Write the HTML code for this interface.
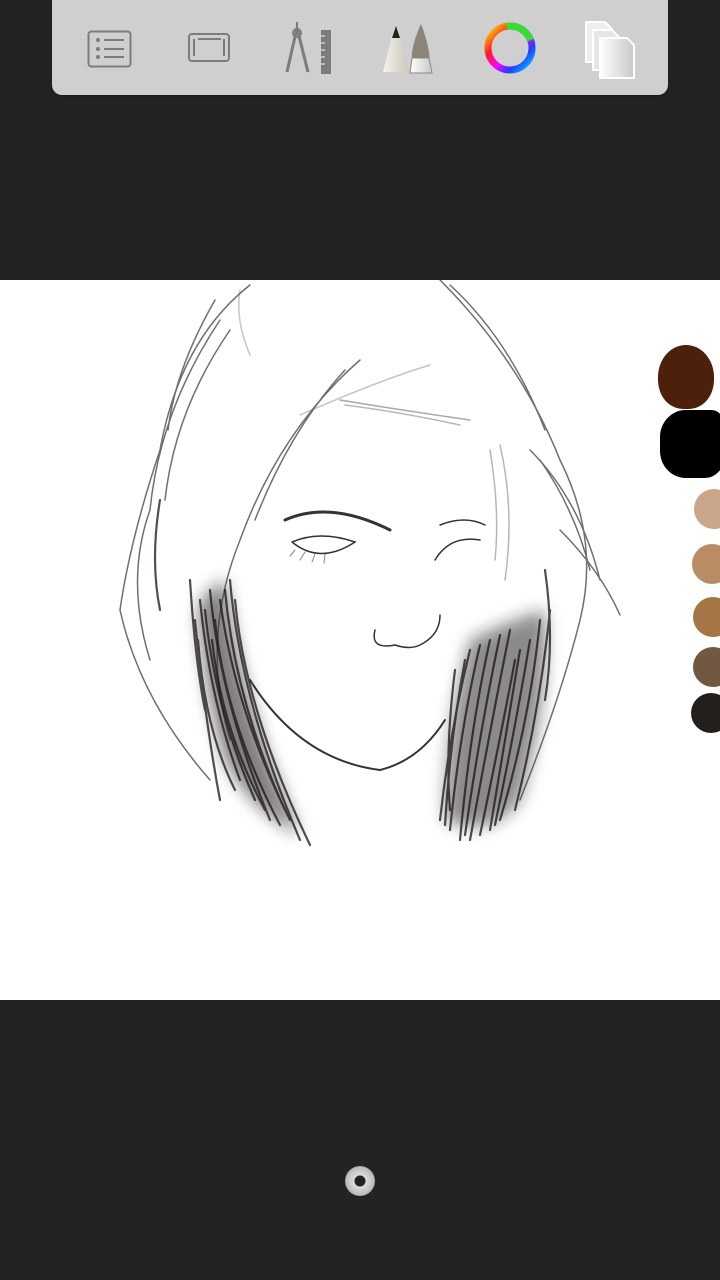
<!DOCTYPE html>
<html><head><style>
html,body{margin:0;padding:0;width:720px;height:1280px;background:#232323;overflow:hidden;position:relative;font-family:"Liberation Sans",sans-serif}
.bar{position:absolute;left:52px;top:-10px;width:616px;height:105px;background:#cfcfcf;border-radius:10px;box-shadow:0 1px 2px rgba(0,0,0,.4)}
.canvas{position:absolute;left:0;top:280px;width:720px;height:720px;background:#fff;overflow:hidden}
.dot{position:absolute;border-radius:50%}
</style></head><body>
<div class="bar"></div>
<svg style="position:absolute;left:0;top:0" width="720" height="100">
<defs>
<linearGradient id="pg" x1="0" x2="1"><stop offset="0" stop-color="#f5f2ec"/><stop offset="1" stop-color="#cdc7bb"/></linearGradient>
<linearGradient id="ppg" x1="0" x2="1"><stop offset="0" stop-color="#fff"/><stop offset="1" stop-color="#c8c8c8"/></linearGradient>
<linearGradient id="cw" x1="0" y1="0" x2="1" y2="1"><stop offset="0" stop-color="#ffea00"/><stop offset=".3" stop-color="#ff2020"/><stop offset=".55" stop-color="#ff00ff"/><stop offset=".75" stop-color="#2040ff"/><stop offset="1" stop-color="#00d0ff"/></linearGradient>
</defs>
<g fill="none" stroke="#7c7c7c" stroke-width="2">
<rect x="88.5" y="31.5" width="42" height="35" rx="3"/>
<line x1="104" y1="40" x2="124" y2="40"/><line x1="104" y1="49" x2="124" y2="49"/><line x1="104" y1="57" x2="124" y2="57"/>
<rect x="189" y="34" width="40" height="27" rx="3"/>
<line x1="198" y1="39" x2="221" y2="39"/><line x1="194" y1="39" x2="194" y2="56"/><line x1="224" y1="39" x2="224" y2="56"/>
</g>
<g fill="#7c7c7c"><circle cx="98" cy="40" r="2"/><circle cx="98" cy="49" r="2"/><circle cx="98" cy="57" r="2"/></g>
<g fill="none" stroke="#7c7c7c" stroke-width="3"><path d="M297 28 L287 72 M297 28 L308 72"/></g>
<circle cx="297" cy="33" r="4" fill="none" stroke="#7c7c7c" stroke-width="2"/>
<line x1="297" y1="22" x2="297" y2="29" stroke="#7c7c7c" stroke-width="2"/>
<rect x="321" y="30" width="10" height="44" fill="#7c7c7c"/>
<g stroke="#cfcfcf" stroke-width="1.5"><line x1="321" y1="36" x2="325" y2="36"/><line x1="321" y1="43" x2="325" y2="43"/><line x1="321" y1="50" x2="325" y2="50"/><line x1="321" y1="57" x2="325" y2="57"/><line x1="321" y1="64" x2="325" y2="64"/></g>
<path d="M383 72 L393 32 Q397 24 399 32 L409 72 Z" fill="url(#pg)"/>
<path d="M392 38 L396 26 L400 38 Z" fill="#222"/>
<path d="M411 72 L412 52 Q415 36 421 24 Q426 36 429 52 L431 72 Z" fill="#8a8578"/>
<path d="M412 58 L429 58 L432 73 L410 73 Z" fill="url(#ppg)" stroke="#888"/>
<circle cx="510" cy="48" r="22" fill="none" stroke="url(#cw)" stroke-width="7"/>
<circle cx="510" cy="48" r="22" fill="none" stroke="#3d3" stroke-width="7" stroke-dasharray="30 200" stroke-dashoffset="-100"/>
<g stroke="#fff" stroke-width="2" fill="#eee">
<path d="M586 22 H605 L612 29 V62 H586 Z"/>
<path d="M593 30 H612 L619 37 V70 H593 Z" fill="#e6e6e6"/>
<path d="M600 38 H627 L634 45 V78 H600 Z" fill="url(#ppg)"/>
</g>
</svg>
<div class="canvas">
<svg width="720" height="720" fill="none" stroke-linecap="round">
<defs><filter id="bl" x="-20%" y="-20%" width="140%" height="140%"><feGaussianBlur stdDeviation="8"/></filter></defs>
<path d="M198 330 Q205 310 225 300 Q240 400 270 480 Q290 530 300 555 Q250 530 225 480 Q205 420 198 330 Z" fill="#1a1414" opacity=".55" filter="url(#bl)"/>
<path d="M470 360 Q510 340 545 330 Q550 420 520 520 Q490 560 445 540 Q445 450 470 360 Z" fill="#1a1414" opacity=".5" filter="url(#bl)"/>
<g stroke="#333" stroke-width="1.5" opacity=".7">
<path d="M250 5 Q180 60 160 170 Q130 260 120 330 Q140 420 210 500"/>
<path d="M220 40 Q160 130 150 230 Q125 300 150 380"/>
<path d="M230 50 Q175 130 165 220"/><path d="M215 20 Q175 90 168 150"/>
<path d="M360 80 Q280 150 240 260 Q200 360 230 460"/>
<path d="M345 90 Q290 150 255 240"/>
<path d="M440 0 Q520 80 560 180 Q600 260 580 340 Q560 420 520 520"/>
<path d="M450 5 Q510 60 545 150"/>
<path d="M530 170 Q580 220 600 300"/><path d="M540 180 Q575 230 590 290"/><path d="M560 250 Q600 290 620 335"/>
<path d="M490 170 Q500 230 495 280" opacity=".5"/><path d="M500 165 Q515 230 505 300" opacity=".5"/>
<path d="M340 120 Q400 130 470 140" opacity=".6"/><path d="M345 125 Q400 132 460 145" opacity=".5"/>
<path d="M300 135 Q380 100 430 85" opacity=".4"/>
<path d="M240 10 Q235 40 250 75" opacity=".4"/>
</g>
<g stroke="#1a1414" stroke-width="2.2" opacity=".75">
<path d="M200 320 Q210 420 240 500"/><path d="M210 310 Q220 420 270 540"/><path d="M195 340 Q205 440 220 520"/>
<path d="M220 320 Q235 430 290 540"/><path d="M230 300 Q240 420 300 560"/>
<path d="M205 330 Q215 430 255 520"/><path d="M215 340 Q225 440 280 545"/><path d="M225 310 Q235 420 285 530"/>
<path d="M198 360 Q205 450 235 510"/><path d="M212 360 Q222 450 265 530"/><path d="M235 320 Q245 430 310 565"/>
<path d="M190 300 Q195 380 205 430"/><path d="M160 220 Q150 280 160 330"/>
<path d="M470 370 Q450 450 440 540"/><path d="M490 360 Q470 450 460 560"/><path d="M510 350 Q490 450 470 560"/>
<path d="M520 370 Q505 460 490 550"/><path d="M540 340 Q530 440 500 540"/><path d="M455 390 Q445 470 450 530"/>
<path d="M480 365 Q460 450 450 550"/><path d="M500 355 Q480 450 465 555"/><path d="M530 360 Q515 450 495 545"/>
<path d="M465 380 Q450 460 445 545"/><path d="M515 380 Q500 460 480 555"/><path d="M550 330 Q540 430 515 530"/>
<path d="M545 290 Q555 360 545 420"/>
</g>
<g stroke="#333" stroke-width="1.5">
<path d="M285 240 Q330 220 390 250" stroke-width="3"/><path d="M292 262 Q320 250 355 262 Q320 285 292 262"/>
<path d="M295 270 L290 276 M305 272 L300 280 M315 274 L312 282 M325 274 L324 283" stroke-width="1" opacity=".6"/>
<path d="M440 245 Q465 235 485 245"/><path d="M435 280 Q450 255 480 260"/>
<path d="M375 350 Q370 370 395 365 Q410 370 420 365 Q440 355 440 335"/>
<path d="M250 400 Q300 480 380 490 Q420 480 445 440" stroke-width="2"/>
</g>
</svg>
<div class="dot" style="left:658px;top:65px;width:56px;height:64px;background:#4d200c;border-radius:50% 50% 45% 45%"></div>
<div class="dot" style="left:660px;top:130px;width:64px;height:68px;background:#000;border-radius:40% 20% 30% 40%"></div>
<div class="dot" style="left:694px;top:209px;width:40px;height:40px;background:#c9a58a"></div>
<div class="dot" style="left:692px;top:264px;width:40px;height:40px;background:#b98c65"></div>
<div class="dot" style="left:693px;top:317px;width:40px;height:40px;background:#a57645"></div>
<div class="dot" style="left:693px;top:367px;width:40px;height:40px;background:#705841"></div>
<div class="dot" style="left:691px;top:413px;width:40px;height:40px;background:#221f1c"></div>
</div>
<div class="dot" style="left:345px;top:1166px;width:30px;height:30px;background:radial-gradient(circle,#222 0 5px,#ddd 6px,#bbb 14px,#999 15px)"></div>
</body></html>
